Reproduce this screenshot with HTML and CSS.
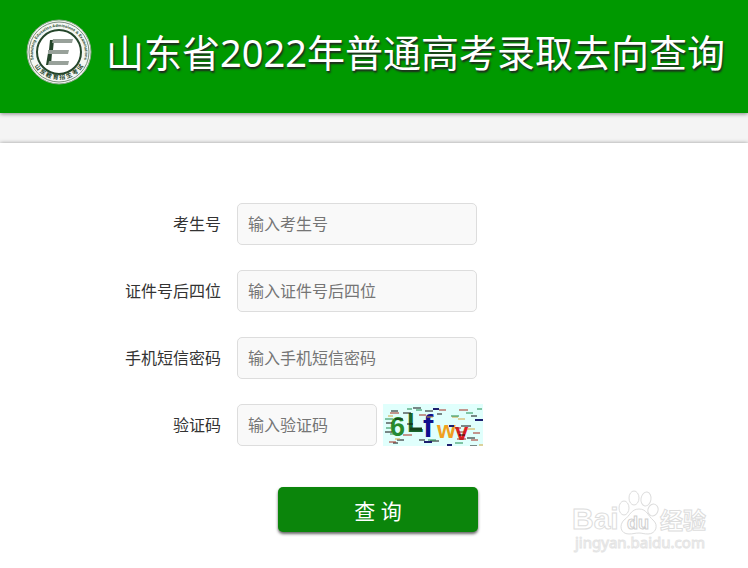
FILE: index.html
```html
<!DOCTYPE html>
<html lang="zh-CN">
<head>
    <meta charset="UTF-8">
    <meta name="viewport" content="width=device-width, initial-scale=1.0">
    <title>山东省2022年普通高考录取去向查询</title>
    <link rel="stylesheet" href="styles.css">
</head>
<body>
    <header class="header">
        <svg class="logo" viewBox="0 0 66 66" aria-hidden="true">
            <defs>
                <path id="arc-top" d="M8 41 A26 26 0 1 1 58 41"/>
                <path id="arc-char" d="M5 39 A29 29 0 0 0 61 39"/>
            </defs>
            <circle cx="33" cy="33" r="32" fill="#f4f7f4" stroke="#8ba78b" stroke-width="1"/>
            <circle cx="33" cy="33" r="30" fill="none" stroke="#7d8f7d" stroke-width="1"/>
            <circle cx="33" cy="33" r="22" fill="#fff" stroke="#24452a" stroke-width="2"/>
            <text class="logo-en"><textPath href="#arc-top" startOffset="50%" text-anchor="middle">Shandong Education Admissions &amp; Examinations</textPath></text>
            <text class="logo-cn"><textPath href="#arc-char" startOffset="50%" text-anchor="middle">山 东 教 育 招 生 考 试</textPath></text>
            <path d="M24 21 h4 l-1 10 h-4z M22 34 h4 l-1 12 h-5z" fill="#24452a"/>
            <path d="M27 20 h20 l-1 4 h-20z M22 31 h21 l-1 4 h-20z M23 42 h20 l-1 4 h-20z" fill="#98a19a"/>
        </svg>
        <h1 class="title">山东省2022年普通高考录取去向查询</h1>
    </header>
    <main class="main">
        <form class="form">
            <div class="row">
                <label class="label" for="ksh">考生号</label>
                <input class="input" id="ksh" type="text" placeholder="输入考生号">
            </div>
            <div class="row">
                <label class="label" for="zjh">证件号后四位</label>
                <input class="input" id="zjh" type="text" placeholder="输入证件号后四位">
            </div>
            <div class="row">
                <label class="label" for="mm">手机短信密码</label>
                <input class="input" id="mm" type="text" placeholder="输入手机短信密码">
            </div>
            <div class="row">
                <label class="label" for="yzm">验证码</label>
                <input class="input short" id="yzm" type="text" placeholder="输入验证码">
                <svg class="captcha" viewBox="0 0 100 42" role="img" aria-label="验证码">
                    <rect width="100" height="42" fill="#e0fffc"/>
                    <text class="cap c1" x="7" y="32">6</text>
                    <text class="cap c2" x="24" y="28">L</text>
                    <text class="cap c3" x="40" y="33">f</text>
                    <text class="cap c4" x="54" y="34">w</text>
                    <text class="cap c5" x="72" y="36">v</text>
                    <g fill="none" stroke-width="1">
                        <path stroke="#111" d="M8 7h7 M20 9h8 M42 7h8 M12 15h8 M3 19h6 M24 20h6 M30 4h8 M2 28h7 M14 36h7 M10 39h5 M36 36h6 M47 37h9 M76 31h6 M84 34h8 M88 12h6 M78 22h10 M54 10h5 M87 42h7"/>
                        <path stroke="#14421c" stroke-width="3" d="M27 25h12"/>
                        <path stroke="#1d2070" stroke-width="2" d="M50 5h6 M92 16h8 M66 22h5 M41 38h8 M64 41h5"/>
                        <path stroke="#a52c20" d="M7 9h9 M56 6h7 M76 6h9 M36 11h7 M20 31h9 M6 38h7 M74 35h9 M90 29h7 M72 24h6 M88 36h7 M74 28h8"/>
                        <path stroke="#d6a53c" d="M5 12h5 M69 13h6 M84 25h8 M12 35h5 M44 13h6 M75 15h7 M96 41h4"/>
                        <path stroke="#1f8a4c" d="M2 15h8 M33 6h6 M24 5h5 M7 30h8 M68 12h8 M83 9h7 M45 36h8 M72 39h8 M94 5h5 M3 24h5"/>
                    </g>
                </svg>
            </div>
            <div class="row actions">
                <button class="submit" type="button">查 询</button>
            </div>
        </form>
    </main>
    <svg class="watermark" viewBox="0 0 140 66" role="img" aria-label="Baidu经验">
        <text class="wm-latin" x="0" y="41">Bai</text>
        <g class="wm-paw">
            <ellipse cx="52" cy="20" rx="5" ry="7"/>
            <ellipse cx="62" cy="10" rx="5" ry="7"/>
            <ellipse cx="74" cy="11" rx="5" ry="7" transform="rotate(10 74 11)"/>
            <ellipse cx="81" cy="22" rx="5" ry="6" transform="rotate(20 81 22)"/>
            <path d="M67 21 C75 21 76 28 81 32 C87 37 84 46 76 46 C72 46 70 45 67 45 C63 45 61 46 57 46 C48 46 47 37 52 32 C58 28 59 21 67 21z"/>
        </g>
        <text class="wm-du" x="55" y="41">du</text>
        <text class="wm-cn" x="88" y="41">经验</text>
        <text class="wm-url" x="3" y="60">jingyan.baidu.com</text>
    </svg>
</body>
</html>
```
FILE: styles.css
```css
* {
    margin: 0;
    padding: 0;
    box-sizing: border-box;
}
body {
    min-height: 100vh;
    display: flex;
    flex-direction: column;
    font-family: "Noto Sans", "Noto Sans CJK SC", sans-serif;
    font-size: 16px;
    color: #333;
    background-color: #f4f4f4;
}
.header {
    display: flex;
    align-items: center;
    gap: 14px;
    padding: 19px 0 28px 26px;
    background-color: #090;
    box-shadow: 0 1px 4px #888;
}
.logo {
    flex: none;
    width: 66px;
    height: 66px;
}
.logo-en {
    font: bold 4px "Liberation Sans", sans-serif;
    fill: #24452a;
}
.logo-cn {
    font: bold 6px "Noto Sans CJK SC", sans-serif;
    fill: #24452a;
}
.title {
    font-size: 38px;
    font-weight: normal;
    line-height: 66px;
    white-space: nowrap;
    color: #fff;
    text-shadow: 1px 2px 2px #222;
}
.main {
    flex: 1;
    margin-top: 30px;
    padding-top: 60px;
    background-color: #fff;
    box-shadow: 0 0 4px #999;
}
.form {
    display: flex;
    flex-direction: column;
    gap: 25px;
}
.row {
    display: flex;
    align-items: center;
}
.label {
    width: 221px;
    margin-right: 16px;
    padding-bottom: 2px;
    text-align: right;
}
.input {
    width: 240px;
    height: 42px;
    padding: 0 10px;
    border: 1px solid #ddd;
    border-radius: 5px;
    font: inherit;
    background-color: #f9f9f9;
}
.input::placeholder {
    color: #757575;
}
.short {
    width: 140px;
}
.captcha {
    width: 100px;
    height: 42px;
    margin-left: 6px;
}
.cap {
    font: bold 27px "Liberation Sans", sans-serif;
}
.c1 { fill: #278b2c; }
.c2 { fill: #17682c; }
.c3 { fill: #10108c; font-size: 31px; }
.c4 { fill: #f0a020; font-size: 24px; }
.c5 { fill: #e01c24; font-size: 24px; }
.actions {
    padding: 16px 0 0 278px;
}
.submit {
    width: 200px;
    height: 45px;
    border: none;
    border-radius: 5px;
    font: inherit;
    font-size: 21px;
    color: #fff;
    background-color: #0b850b;
    box-shadow: 0 2px 3px #666;
    cursor: pointer;
}
/* floats over the lower right corner */
.watermark {
    position: absolute;
    right: 36px;
    bottom: 14px;
    width: 140px;
    height: 66px;
}
.watermark text,
.wm-paw {
    fill: #fff;
    stroke: #ddd;
    stroke-width: 1px;
}
.wm-latin {
    font: bold 30px "Liberation Sans", sans-serif;
}
.watermark .wm-du {
    font: bold 18px "Liberation Sans", sans-serif;
    stroke: #d0d0d0;
}
.wm-cn {
    font: bold 23px "Noto Sans CJK SC", sans-serif;
}
.watermark .wm-url {
    font: 15px "Noto Sans", sans-serif;
    stroke: #e4e4e4;
}
```
